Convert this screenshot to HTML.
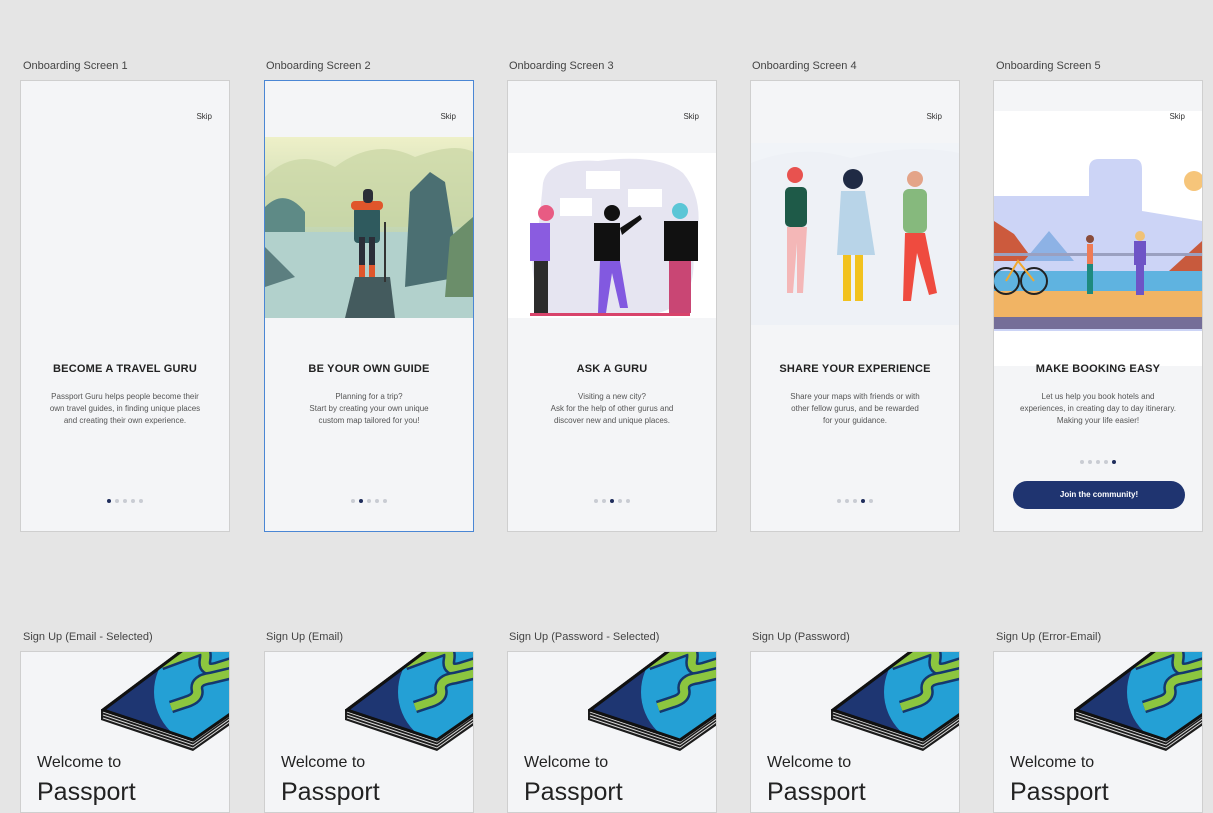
<!DOCTYPE html>
<html><head><meta charset="utf-8"><style>
body{margin:0;width:1213px;height:808px;background:#e5e5e5;font-family:"Liberation Sans",sans-serif;position:relative;overflow:hidden}
.lbl{position:absolute;font-size:11px;color:#444}
.card{position:absolute;width:208px;height:450px;background:#f4f5f7;border:1px solid #cfcfcf;overflow:hidden}
.card.sel{border-color:#4a86d4}
.skip{position:absolute;right:17px;top:31px;font-size:8px;color:#333}
.t{position:absolute;left:0;right:0;top:282px;text-align:center;font-weight:bold;font-size:11px;color:#222;letter-spacing:.2px}
.d{position:absolute;left:10px;right:10px;top:310px;text-align:center;font-size:8px;line-height:12px;color:#555}
.dots{position:absolute;left:0;right:0;top:418px;text-align:center;font-size:0}
.dots i{display:inline-block;width:4px;height:4px;border-radius:50%;background:#c9ccd3;margin:0 2px}
.dots i.on{background:#1f2d5c}
.c2{position:absolute;width:208px;height:160px;background:#f4f5f7;border:1px solid #cfcfcf;top:651px;overflow:hidden}
.w{position:absolute;left:16px;top:102px;font-size:16px;color:#222}
.p{position:absolute;left:16px;top:126px;font-size:25px;color:#222}
</style></head><body>

<div class="lbl" style="left:23px;top:60px">Onboarding Screen 1</div>
<div class="lbl" style="left:266px;top:60px">Onboarding Screen 2</div>
<div class="lbl" style="left:509px;top:60px">Onboarding Screen 3</div>
<div class="lbl" style="left:752px;top:60px">Onboarding Screen 4</div>
<div class="lbl" style="left:996px;top:60px">Onboarding Screen 5</div>

<div class="card" style="left:20px;top:80px">
<div class="skip">Skip</div>
<div class="t">BECOME A TRAVEL GURU</div>
<div class="d">Passport Guru helps people become their<br>own travel guides, in finding unique places<br>and creating their own experience.</div>
<div class="dots"><i class="on"></i><i></i><i></i><i></i><i></i></div>
</div>

<div class="card sel" style="left:264px;top:80px">
<div class="skip">Skip</div>
<svg style="position:absolute;left:0;top:56px" width="208" height="181" viewBox="0 0 208 181">
<defs><linearGradient id="g2" x1="0" y1="0" x2="0" y2="1"><stop offset="0" stop-color="#eef0c8"/><stop offset=".45" stop-color="#c7d8b2"/><stop offset="1" stop-color="#a6cbc6"/></linearGradient></defs>
<rect width="208" height="181" fill="url(#g2)"/>
<path d="M0 40 Q30 10 70 30 Q110 0 150 20 Q190 5 208 15 V90 H0Z" fill="#c9d6a4" opacity=".7"/>
<path d="M0 70 Q20 50 40 75 L40 130 H0Z" fill="#5e8a86"/>
<rect x="0" y="95" width="208" height="86" fill="#b2d1cc"/>
<path d="M145 55 L165 35 L180 45 L195 140 L140 150Z" fill="#4b6f72"/>
<path d="M185 100 L208 80 V160 H180Z" fill="#6b8e6a"/>
<path d="M0 110 L30 140 L0 150Z" fill="#5c7f80"/>
<path d="M90 140 L125 140 L130 181 H80Z" fill="#445b5e"/>
<rect x="89" y="70" width="26" height="36" rx="4" fill="#2f5a5e"/>
<rect x="86" y="64" width="32" height="9" rx="4" fill="#e0562b"/>
<rect x="94" y="100" width="6" height="38" fill="#2b2e38"/><rect x="104" y="100" width="6" height="38" fill="#2b2e38"/>
<rect x="94" y="128" width="6" height="12" fill="#e0562b"/><rect x="104" y="128" width="6" height="12" fill="#e0562b"/>
<rect x="119" y="85" width="2" height="60" fill="#333"/>
<rect x="98" y="52" width="10" height="14" rx="4" fill="#2b2e38"/>
</svg>
<div class="t">BE YOUR OWN GUIDE</div>
<div class="d">Planning for a trip?<br>Start by creating your own unique<br>custom map tailored for you!</div>
<div class="dots"><i></i><i class="on"></i><i></i><i></i><i></i></div>
</div>

<div class="card" style="left:507px;top:80px">
<div class="skip">Skip</div>
<svg style="position:absolute;left:0;top:72px" width="208" height="165" viewBox="0 0 208 165">
<rect width="208" height="165" fill="#fff"/>
<path d="M35 30 Q40 5 90 8 Q150 0 175 20 Q200 50 185 100 Q190 150 150 160 L40 160 Q15 120 30 80Z" fill="#e6e5f1"/>
<rect x="78" y="18" width="34" height="18" fill="#fff"/><rect x="52" y="45" width="32" height="18" fill="#fff"/><rect x="120" y="36" width="34" height="18" fill="#fff"/>
<rect x="22" y="160" width="160" height="3" fill="#d8436b"/>
<circle cx="38" cy="60" r="8" fill="#e85b83"/><rect x="22" y="70" width="20" height="38" fill="#8a5ce0"/><rect x="26" y="108" width="14" height="52" fill="#2c2c2c"/>
<circle cx="104" cy="60" r="8" fill="#111"/><rect x="86" y="70" width="26" height="38" fill="#111"/><path d="M112 75 L132 62 L134 66 L114 82Z" fill="#111"/><path d="M92 108 L112 108 L120 155 L112 155 L104 120 L98 160 L90 160Z" fill="#8259e0"/>
<circle cx="172" cy="58" r="8" fill="#5bc6d6"/><rect x="156" y="68" width="34" height="40" fill="#111"/><rect x="161" y="108" width="22" height="52" fill="#c94674"/>
</svg>
<div class="t">ASK A GURU</div>
<div class="d">Visiting a new city?<br>Ask for the help of other gurus and<br>discover new and unique places.</div>
<div class="dots"><i></i><i></i><i class="on"></i><i></i><i></i></div>
</div>

<div class="card" style="left:750px;top:80px">
<div class="skip">Skip</div>
<svg style="position:absolute;left:0;top:62px" width="208" height="182" viewBox="0 0 208 182">
<rect width="208" height="182" fill="#f1f4f8"/>
<path d="M0 20 Q50 0 100 15 Q160 0 208 10 V182 H0Z" fill="#eef1f6"/>
<circle cx="44" cy="32" r="8" fill="#e8524f"/><rect x="34" y="44" width="22" height="40" rx="5" fill="#1e5a48"/><path d="M36 84 L56 84 L52 150 L46 150 L46 100 L42 150 L36 150Z" fill="#f4b7b7"/>
<circle cx="102" cy="36" r="10" fill="#1f2a44"/><path d="M90 48 L114 48 L124 112 L86 112Z" fill="#b8d4e8"/><rect x="92" y="112" width="8" height="46" fill="#f2c21e"/><rect x="104" y="112" width="8" height="46" fill="#f2c21e"/>
<circle cx="164" cy="36" r="8" fill="#e4a488"/><rect x="152" y="46" width="24" height="44" rx="6" fill="#86b97d"/><path d="M154 90 L174 90 L186 150 L178 152 L166 110 L160 158 L152 158Z" fill="#ef4b3f"/>
</svg>
<div class="t">SHARE YOUR EXPERIENCE</div>
<div class="d">Share your maps with friends or with<br>other fellow gurus, and be rewarded<br>for your guidance.</div>
<div class="dots"><i></i><i></i><i></i><i class="on"></i><i></i></div>
</div>

<div class="card" style="left:993px;top:80px">
<svg style="position:absolute;left:0;top:30px" width="208" height="255" viewBox="0 0 208 255">
<rect width="208" height="255" fill="#fff"/>
<path d="M0 85 L95 85 L95 58 Q95 48 105 48 L140 48 Q148 48 148 58 L148 100 L208 110 V220 H0Z" fill="#ccd4f6"/>
<circle cx="200" cy="70" r="10" fill="#f6c57a"/>
<path d="M0 110 L20 123 L40 150 L0 150Z" fill="#cc5a3d"/>
<path d="M30 150 L55 120 L80 150Z" fill="#8db2e5"/>
<path d="M175 160 L208 130 V160Z" fill="#c85a3d"/>
<rect x="0" y="160" width="208" height="25" fill="#5fb3e0"/>
<rect x="0" y="180" width="208" height="26" fill="#f1b464"/>
<rect x="0" y="142" width="208" height="3" fill="#9aa0c0"/>
<circle cx="12" cy="170" r="13" fill="none" stroke="#222" stroke-width="2"/><circle cx="40" cy="170" r="13" fill="none" stroke="#222" stroke-width="2"/><path d="M12 170 L24 150 L40 170" stroke="#f0a830" stroke-width="2" fill="none"/>
<rect x="93" y="133" width="6" height="20" fill="#ef7b55"/><rect x="93" y="153" width="6" height="30" fill="#1e8a7e"/><circle cx="96" cy="128" r="4" fill="#8a4c3a"/>
<rect x="140" y="130" width="12" height="24" fill="#6e54c6"/><rect x="142" y="154" width="8" height="30" fill="#6e54c6"/><circle cx="146" cy="125" r="5" fill="#f0c277"/>
<rect x="0" y="206" width="208" height="12" fill="#3a2a5a" opacity=".6"/>
</svg>
<div class="skip">Skip</div>
<div class="t">MAKE BOOKING EASY</div>
<div class="d">Let us help you book hotels and<br>experiences, in creating day to day itinerary.<br>Making your life easier!</div>
<div class="dots" style="top:379px"><i></i><i></i><i></i><i></i><i class="on"></i></div>
<div style="position:absolute;left:19px;top:400px;width:172px;height:28px;border-radius:14px;background:#1f3470;color:#fff;font-size:8px;font-weight:bold;text-align:center;line-height:28px">Join the community!</div>
</div>

<div class="lbl" style="left:23px;top:631px">Sign Up (Email - Selected)</div>
<div class="lbl" style="left:266px;top:631px">Sign Up (Email)</div>
<div class="lbl" style="left:509px;top:631px">Sign Up (Password - Selected)</div>
<div class="lbl" style="left:752px;top:631px">Sign Up (Password)</div>
<div class="lbl" style="left:996px;top:631px">Sign Up (Error-Email)</div>

<svg width="0" height="0" style="position:absolute"><defs>
<clipPath id="cv"><path d="M166 -5 L82 58 L172 88 L212 60 L212 -5Z"/></clipPath>
<g id="bk">
<path d="M80 57 L80 68 L172 99 L212 71 L212 58 L172 86Z" fill="#1b1b1b"/>
<path d="M82 60 L172 90 L210 63 M82 63 L172 93 L210 66 M82 66 L172 96 L210 69" stroke="#d8d8d8" stroke-width="1" fill="none"/>
<path d="M166 -5 L82 58 L172 88 L212 60 L212 -5Z" fill="#1e3672" stroke="#111" stroke-width="3" stroke-linejoin="round"/>
<g clip-path="url(#cv)">
<circle cx="188" cy="40" r="55" fill="#24a0d5"/>
<path d="M140 12 L178 -2 Q186 -4 184 8 Q182 20 196 16 L215 10" stroke="#14386e" stroke-width="13" fill="none" stroke-linejoin="round"/>
<path d="M140 12 L178 -2 Q186 -4 184 8 Q182 20 196 16 L215 10" stroke="#8cc63f" stroke-width="8" fill="none" stroke-linejoin="round"/>
<path d="M150 55 L165 50 Q178 46 176 38 Q174 28 190 26 L215 20" stroke="#14386e" stroke-width="13" fill="none" stroke-linejoin="round"/>
<path d="M150 55 L165 50 Q178 46 176 38 Q174 28 190 26 L215 20" stroke="#8cc63f" stroke-width="8" fill="none" stroke-linejoin="round"/>
</g>
<path d="M166 -5 L82 58 L172 88 L212 60" fill="none" stroke="#111" stroke-width="3" stroke-linejoin="round"/>
</g></defs></svg>

<div class="c2" style="left:20px"><svg width="208" height="105"><use href="#bk"/></svg><div class="w">Welcome to</div><div class="p">Passport</div></div>
<div class="c2" style="left:264px"><svg width="208" height="105"><use href="#bk"/></svg><div class="w">Welcome to</div><div class="p">Passport</div></div>
<div class="c2" style="left:507px"><svg width="208" height="105"><use href="#bk"/></svg><div class="w">Welcome to</div><div class="p">Passport</div></div>
<div class="c2" style="left:750px"><svg width="208" height="105"><use href="#bk"/></svg><div class="w">Welcome to</div><div class="p">Passport</div></div>
<div class="c2" style="left:993px"><svg width="208" height="105"><use href="#bk"/></svg><div class="w">Welcome to</div><div class="p">Passport</div></div>
</body></html>
